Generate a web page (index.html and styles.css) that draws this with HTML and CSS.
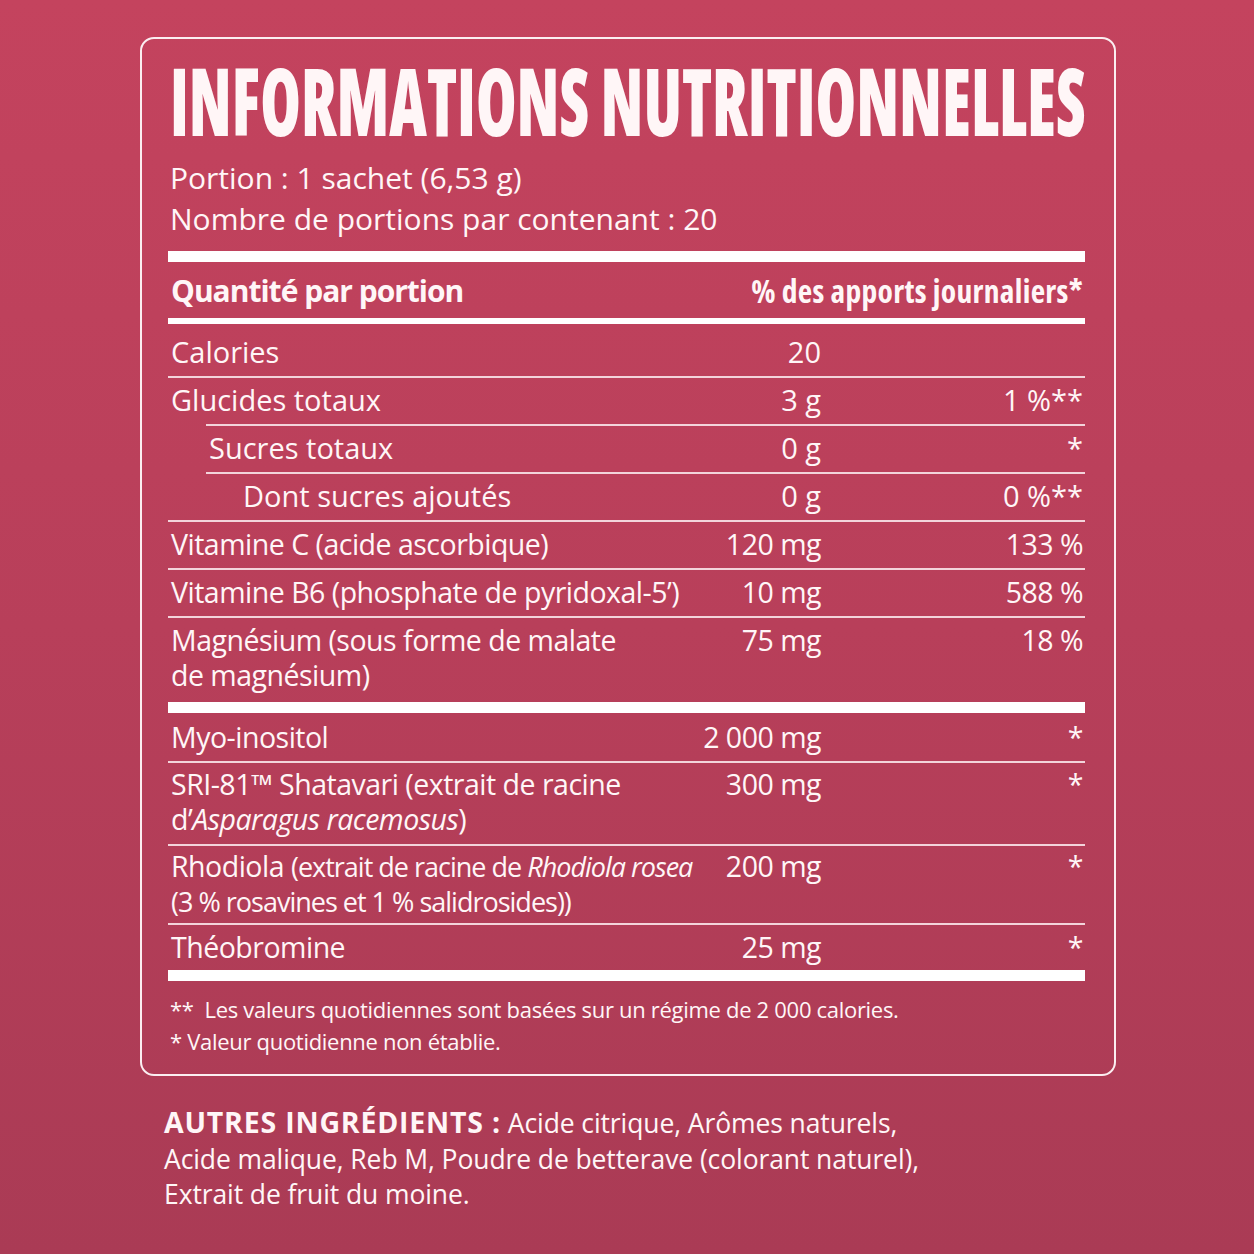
FILE: index.html
```html
<!DOCTYPE html>
<html lang="fr">
<head>
<meta charset="utf-8">
<title>Informations nutritionnelles</title>
<link rel="stylesheet" href="styles.css">
</head>
<body>
<main class="page">
  <section class="panel">
    <h1 class="title">INFORMATIONS NUTRITIONNELLES</h1>
    <div class="serving">
      <p>Portion : 1 sachet (6,53 g)</p>
      <p>Nombre de portions par contenant : 20</p>
    </div>

    <div class="facts">
      <div class="bar bar-thick"></div>
      <div class="head">
        <span class="head-left">Quantité par portion</span>
        <span class="head-right">% des apports journaliers*</span>
      </div>
      <div class="bar bar-mid"></div>

      <div class="row wide row-cal first">
        <span class="name">Calories</span><span class="amt">20</span><span class="dv"></span>
      </div>
      <div class="row wide">
        <span class="name">Glucides totaux</span><span class="amt">3 g</span><span class="dv">1 %**</span>
      </div>
      <div class="row wide sub">
        <span class="name">Sucres totaux</span><span class="amt">0 g</span><span class="dv">*</span>
      </div>
      <div class="row wide sub sub2">
        <span class="name">Dont sucres ajoutés</span><span class="amt">0 g</span><span class="dv">0 %**</span>
      </div>
      <div class="row">
        <span class="name">Vitamine C (acide ascorbique)</span><span class="amt">120 mg</span><span class="dv">133 %</span>
      </div>
      <div class="row">
        <span class="name">Vitamine B6 (phosphate de pyridoxal-5’)</span><span class="amt">10 mg</span><span class="dv">588 %</span>
      </div>
      <div class="row multi row-mg">
        <span class="name">Magnésium (sous forme de malate<br>de magnésium)</span><span class="amt">75 mg</span><span class="dv">18 %</span>
      </div>

      <div class="bar bar-thick"></div>

      <div class="row first row-myo">
        <span class="name">Myo-inositol</span><span class="amt">2 000 mg</span><span class="dv">*</span>
      </div>
      <div class="row multi row-sri">
        <span class="name">SRI-81™ Shatavari (extrait de racine<br>d’<i>Asparagus racemosus</i>)</span><span class="amt">300 mg</span><span class="dv">*</span>
      </div>
      <div class="row multi row-rho">
        <span class="name">Rhodiola <span class="tight">(extrait de racine de <i>Rhodiola rosea</i><br>(3 % rosavines et 1 % salidrosides))</span></span><span class="amt">200 mg</span><span class="dv">*</span>
      </div>
      <div class="row row-theo">
        <span class="name">Théobromine</span><span class="amt">25 mg</span><span class="dv">*</span>
      </div>

      <div class="bar bar-thick"></div>
    </div>

    <div class="notes">
      <p>**&nbsp; Les valeurs quotidiennes sont basées sur un régime de 2 000 calories.</p>
      <p>* Valeur quotidienne non établie.</p>
    </div>
  </section>

  <p class="ingredients"><b>AUTRES INGRÉDIENTS :</b> Acide citrique, Arômes naturels,<br>Acide malique, Reb M, Poudre de betterave (colorant naturel),<br>Extrait de fruit du moine.</p>
</main>
</body>
</html>
```

FILE: styles.css
```css
* { box-sizing: border-box; }

html, body {
  margin: 0;
  padding: 0;
}

body {
  width: 1254px;
  height: 1254px;
  overflow: hidden;
  background: linear-gradient(180deg, #c4435e 0%, #b83f5a 50%, #aa3b55 100%);
  color: #fff6f7;
  font-family: "Open Sans", "Liberation Sans Narrow", "DejaVu Sans Condensed", sans-serif;
  font-stretch: 92%;
}

.page {
  padding: 37px 0 0 140px;
}

.panel {
  width: 976px;
  border: 2px solid #fbeef1;
  border-radius: 14px;
  padding: 14px 29px 17px 28px;
}

.title {
  margin: 0;
  height: 94px;
  font-size: 94px;
  line-height: 94px;
  font-weight: 800;
  font-stretch: 75%;
  white-space: nowrap;
  transform-origin: left center;
  transform: scaleX(0.696);
}

.serving {
  margin-top: 10px;
  font-size: 30px;
  line-height: 41px;
  font-stretch: 100%;
}

.serving p { margin: 0; }

.facts {
  margin-top: 12px;
  margin-left: -2px;
}

.bar { background: #fff; }
.bar-thick { height: 11px; }
.bar-mid { height: 6px; }

.head {
  display: flex;
  justify-content: space-between;
  padding: 0 2px 0 3px;
  height: 56px;
  align-items: center;
  font-weight: 700;
  font-size: 30px;
}
.head-left { font-stretch: 92%; letter-spacing: -1px; }
.head-right { font-stretch: 75%; font-size: 31.5px; letter-spacing: 0.3px; }

.row {
  display: grid;
  grid-template-columns: minmax(0, 1fr) 160px 262px;
  border-top: 2px solid #f3d4db;
  padding: 4px 2px 6px 3px;
  font-size: 28.5px;
  letter-spacing: -0.5px;
  line-height: 36px;
  align-items: start;
  white-space: nowrap;
}

.row.wide { font-stretch: 100%; font-size: 29px; letter-spacing: 0; }
.row.first { border-top: none; }
.row-cal { padding-top: 10px; padding-bottom: 6px; }
.row.sub { margin-left: 38px; padding-left: 3px; }
.row.sub2 .name { padding-left: 34px; }

.row.multi { line-height: 35px; padding-top: 5px; padding-bottom: 7px; }
.row.row-mg { padding-bottom: 9px; }
.row-myo { padding-top: 6px; padding-bottom: 6px; }
.row.row-sri { padding-top: 4px; padding-bottom: 7px; }
.row.row-rho { line-height: 34px; padding-top: 3px; padding-bottom: 4px; }
.row-theo { padding-top: 4px; padding-bottom: 5px; }

.tight {
  font-size: 27px;
  letter-spacing: -1px;
}

.amt { text-align: right; }
.dv { text-align: right; }

.notes {
  margin-top: 12px;
  font-size: 22px;
  letter-spacing: -0.3px;
  line-height: 32px;
}
.notes p { margin: 0; }

.ingredients {
  margin: 29px 0 0 24px;
  font-size: 26.5px;
  letter-spacing: -0.1px;
  line-height: 35.5px;
}
.ingredients b {
  font-weight: 700;
  font-stretch: 100%;
  font-size: 28.5px;
  letter-spacing: 0.8px;
}
```
